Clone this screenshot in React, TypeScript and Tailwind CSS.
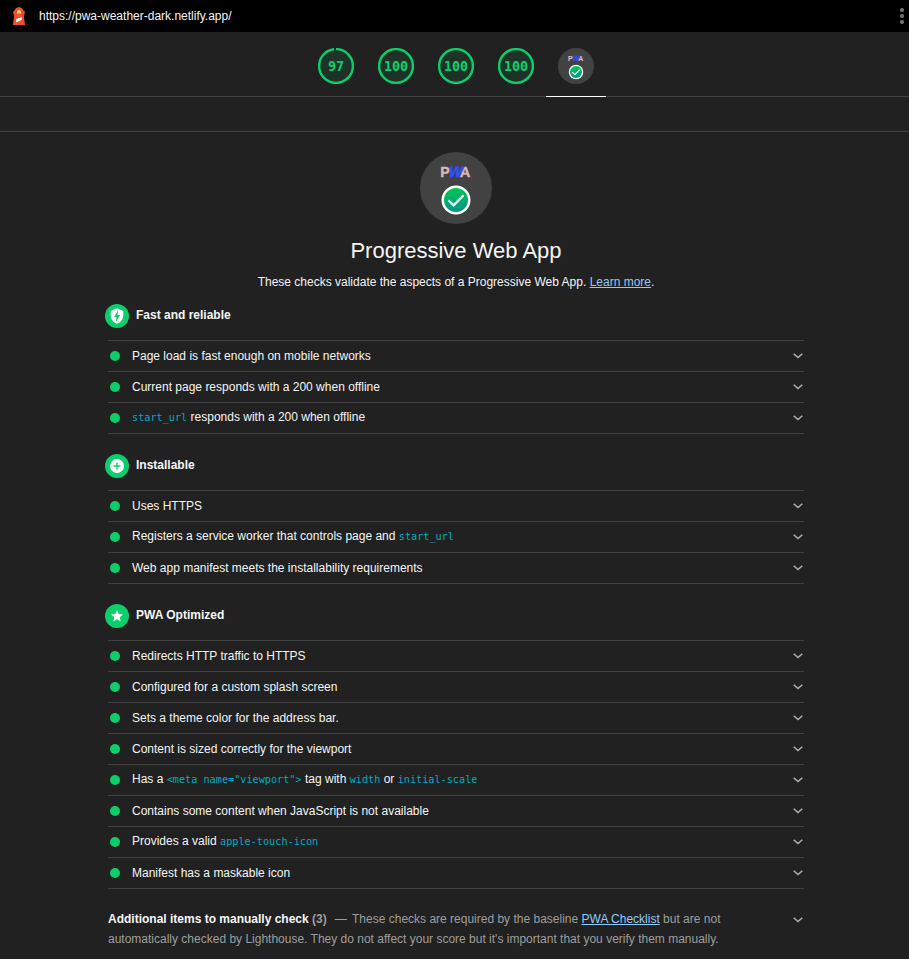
import type { ReactNode } from 'react';

const Code = ({ children }: { children: ReactNode }) => (
  <code className="font-['DejaVu_Sans_Mono',monospace] text-[10.2px] text-[#00acc1]">{children}</code>
);

const Chevron = () => (
  <svg width="12" height="8" viewBox="0 0 12 8" className="shrink-0" fill="none" stroke="#b0b0b0" strokeWidth="1.5">
    <path d="M1.7 1.8 6 5.6l4.3-3.8" />
  </svg>
);

function Gauge({ score }: { score: number }) {
  const length = 2 * Math.PI * 16.9;
  const gap = score === 100 ? 0 : 2.6;
  return (
    <div className="flex h-16 w-[60px] items-center justify-center pt-1">
      <div className="grid h-9 w-9 place-items-center">
        <svg width="36" height="36" viewBox="0 0 36 36" className="col-start-1 row-start-1">
          <circle cx="18" cy="18" r="17" fill="#0cce6b" fillOpacity="0.1" />
          <circle
            cx="18"
            cy="18"
            r="16.9"
            fill="none"
            stroke="#0cce6b"
            strokeWidth="2.4"
            strokeDasharray={`${length - gap} ${gap}`}
            transform="rotate(-90 18 18)"
          />
        </svg>
        <span className="col-start-1 row-start-1 pt-[2px] font-['DejaVu_Sans_Mono',monospace] text-[13.4px] leading-4 font-bold text-[#0cce6b]">
          {score}
        </span>
      </div>
    </div>
  );
}

function PwaBadge({ size, id }: { size: number; id: string }) {
  return (
    <svg width={size} height={size} viewBox="0 0 72 72" className="block">
      <defs>
        <linearGradient id={id} x1="0.4" y1="0" x2="0.6" y2="1">
          <stop offset="0" stopColor="#00c852" />
          <stop offset="1" stopColor="#009688" />
        </linearGradient>
      </defs>
      <circle cx="36" cy="36" r="36" fill="#424242" />
      <g fontFamily="Liberation Sans, sans-serif" fontWeight="700" fontSize="15.4" strokeWidth="0.4">
        <text x="20.2" y="25.4" textLength="9.4" lengthAdjust="spacingAndGlyphs" fill="#d7b9b7" stroke="#d7b9b7">P</text>
        <text x="39.8" y="25.4" textLength="10.6" lengthAdjust="spacingAndGlyphs" fill="#d7b9b7" stroke="#d7b9b7">A</text>
        <text transform="translate(27.8 25.4) skewX(-14)" textLength="14" lengthAdjust="spacingAndGlyphs" fill="#304ffe" stroke="#304ffe">W</text>
      </g>
      <circle cx="36" cy="48" r="14.5" fill="#fff" />
      <circle cx="36" cy="48" r="12" fill={`url(#${id})`} />
      <path d="m28.5 48.2 5.2 5.1 9.8-10" fill="none" stroke="#fff" strokeWidth="2.3" />
    </svg>
  );
}

const Lighthouse = () => (
  <svg width="14" height="20" viewBox="0 0 14 20">
    <path d="M7 1c2.3.5 4 1.8 4.7 3.9h1v3.6h-.8v2.3l1.2 8.2H.9l1.2-8.2V8.5h-.8V4.9h1C3 2.8 4.7 1.5 7 1z" fill="#eb5030" />
    <path d="M5 7.6V5.9a2 2 0 0 1 4 0v1.7z" fill="#fbd960" />
    <path d="m4.2 13 5.6-1.8v2.6l-5.6 2.6z" fill="#fff" />
  </svg>
);

type Section = { title: string; icon: string; items: ReactNode[] };

const sections: Section[] = [
  {
    title: 'Fast and reliable',
    icon: 'M12 4.3l6.3 2.8v4.2c0 3.88-2.69 7.52-6.3 8.4-3.61-.88-6.3-4.51-6.3-8.4V7.1L12 4.3zm-.56 12.88l3.3-5.79.04-.08c.05-.1.01-.29-.26-.29h-1.96l.56-3.92h-.56L9.3 12.82c0 .03.07-.12-.03.07-.11.2-.12.37.2.37h1.97l-.56 3.92h.56z',
    items: [
      'Page load is fast enough on mobile networks',
      'Current page responds with a 200 when offline',
      <><Code>start_url</Code> responds with a 200 when offline</>,
    ],
  },
  {
    title: 'Installable',
    icon: 'M12 5a7 7 0 1 0 0 14 7 7 0 0 0 0-14zm3.5 7.7h-2.8v2.8h-1.4v-2.8H8.5v-1.4h2.8V8.5h1.4v2.8h2.8v1.4z',
    items: [
      'Uses HTTPS',
      <>Registers a service worker that controls page and <Code>start_url</Code></>,
      'Web app manifest meets the installability requirements',
    ],
  },
  {
    title: 'PWA Optimized',
    icon: 'M12 15.3l3.7 2.3-1-4.3 3.3-2.8-4.3-.4L12 6l-1.7 4.1-4.3.4 3.3 2.8-1 4.3z',
    items: [
      'Redirects HTTP traffic to HTTPS',
      'Configured for a custom splash screen',
      'Sets a theme color for the address bar.',
      'Content is sized correctly for the viewport',
      <>Has a <Code>{'<meta name="viewport">'}</Code> tag with <Code>width</Code> or <Code>initial-scale</Code></>,
      'Contains some content when JavaScript is not available',
      <>Provides a valid <Code>apple-touch-icon</Code></>,
      'Manifest has a maskable icon',
    ],
  },
];

function AuditGroup({ title, icon, items }: Section) {
  return (
    <section className="mb-5">
      <div className="-ml-[3px] flex h-9 items-start">
        <svg width="24" height="24" viewBox="0 0 24 24">
          <circle cx="12" cy="12" r="12" fill="#0cce6b" />
          <path d={icon} fill="#fff" />
        </svg>
        <h2 className="ml-[7px] leading-[22px] font-bold">{title}</h2>
      </div>
      <ul className="border-t border-[#424242]">
        {items.map((item, i) => (
          <li key={i} className="flex h-[31px] items-center border-b border-[#424242] pl-0.5">
            <span className="h-2.5 w-2.5 shrink-0 rounded-full bg-[#0cce6b]" />
            <span className={`ml-3 flex-1 leading-5 ${typeof item === 'string' ? '' : 'pb-px'}`}>{item}</span>
            <Chevron />
          </li>
        ))}
      </ul>
    </section>
  );
}

export default function App() {
  return (
    <div className="h-[959px] overflow-hidden bg-[#212121] font-['Liberation_Sans',Arial,sans-serif] text-[12px] text-[#f5f5f5]">
      <header className="flex h-8 items-center bg-black pr-1 pl-3">
        <Lighthouse />
        <span className="ml-[13px] flex-1 leading-4">https://pwa-weather-dark.netlify.app/</span>
        <svg width="6" height="18" viewBox="0 0 6 18" fill="#757575">
          <circle cx="3" cy="3" r="2" />
          <circle cx="3" cy="9" r="2" />
          <circle cx="3" cy="15" r="2" />
        </svg>
      </header>

      <nav className="flex h-[65px] justify-center border-b border-[#424242] pl-[3px]">
        {[97, 100, 100, 100].map((score, i) => (
          <Gauge key={i} score={score} />
        ))}
        <div className="flex h-[65px] w-[60px] justify-center border-b border-white pt-4">
          <PwaBadge size={36} id="badge-small" />
        </div>
      </nav>
      <div className="h-[35px] border-b border-[#424242]" />

      <main className="ml-[108px] w-[696px] pt-5">
        <div className="flex flex-col items-center">
          <PwaBadge size={72} id="badge-large" />
          <h1 className="mt-3 text-[22px] leading-[30px]">Progressive Web App</h1>
          <p className="mt-[6px] mb-3 leading-5">
            These checks validate the aspects of a Progressive Web App.{' '}
            <a className="text-[#90caf9] underline">Learn more</a>.
          </p>
        </div>
        {sections.map((section) => (
          <AuditGroup key={section.title} {...section} />
        ))}
        <div className="flex items-start">
          <p className="w-[650px] leading-5 text-[#9e9e9e]">
            <span className="font-bold text-[#f5f5f5]">Additional items to manually check</span>{' '}
            <span className="font-bold">(3)</span>
            <span className="mr-[5.3px] ml-2">—</span>
            <span>These checks are required by the baseline </span>
            <a className="text-[#90caf9] underline">PWA Checklist</a> but are not
            <br />
            automatically checked by Lighthouse. They do not affect your score but it's important that you verify them manually.
          </p>
          <div className="ml-auto pt-[7px]">
            <Chevron />
          </div>
        </div>
      </main>
    </div>
  );
}
